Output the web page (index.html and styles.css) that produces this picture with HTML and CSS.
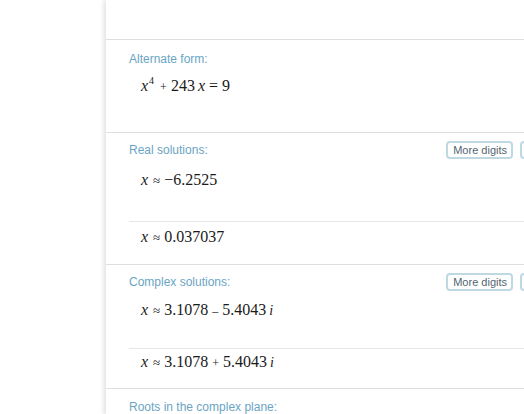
FILE: index.html
```html
<!DOCTYPE html>
<html>
<head>
<meta charset="utf-8">
<link rel="stylesheet" href="styles.css">
</head>
<body>
<div class="page">
  <div class="gutter"></div>
  <main class="panel">
    <section class="pod pod-top"></section>

    <section class="pod pod-alt">
      <div class="pod-head"><h3 class="label">Alternate form:</h3></div>
      <div class="math math-alt"><i>x</i><sup>4</sup><span class="op">+</span>243<span class="sp"></span><i>x</i><span class="op eq">=</span>9</div>
    </section>

    <section class="pod pod-real">
      <div class="pod-head">
        <h3 class="label">Real solutions:</h3>
        <div class="btns"><button class="btn">More digits</button><button class="btn btn-clipped" aria-label="Step-by-step solution"></button></div>
      </div>
      <div class="row row-first"><div class="math"><i>x</i><span class="approx">≈</span>−6.2525</div></div>
      <div class="row row-second"><div class="math"><i>x</i><span class="approx">≈</span>0.037037</div></div>
    </section>

    <section class="pod pod-complex">
      <div class="pod-head">
        <h3 class="label">Complex solutions:</h3>
        <div class="btns"><button class="btn">More digits</button><button class="btn btn-clipped" aria-label="Step-by-step solution"></button></div>
      </div>
      <div class="row row-first"><div class="math"><i>x</i><span class="approx">≈</span>3.1078<span class="op">–</span>5.4043<span class="sp"></span><i class="im">i</i></div></div>
      <div class="row row-second"><div class="math"><i>x</i><span class="approx">≈</span>3.1078<span class="op">+</span>5.4043<span class="sp"></span><i class="im">i</i></div></div>
    </section>

    <section class="pod pod-roots">
      <div class="pod-head"><h3 class="label">Roots in the complex plane:</h3></div>
    </section>
  </main>
</div>
</body>
</html>
```

FILE: styles.css
```css
html, body {
  margin: 0;
  padding: 0;
  background: #ffffff;
  overflow: hidden;
  width: 524px;
  height: 414px;
}

.page {
  display: flex;
  width: 700px;
}

.gutter {
  width: 106px;
  flex: none;
  background: #ffffff;
}

.panel {
  width: 497px;
  flex: none;
  background: #ffffff;
  box-shadow: -2px 0 5px rgba(0, 0, 0, 0.13);
  min-height: 414px;
}

.pod {
  border-bottom: 1px solid #dedede;
  padding: 0 23px;
}

.pod-top { height: 39px; padding: 0; }

.pod-alt { padding-top: 10px; height: 82px; }
.pod-real { padding-top: 8px; height: 123px; }
.pod-complex { padding-top: 8px; height: 115px; }
.pod-roots { border-bottom: none; padding-top: 9px; }

.pod-head {
  display: flex;
  align-items: center;
  min-height: 18px;
}

.label {
  flex: 1;
  margin: 0;
  font: normal 12px/14px "Liberation Sans", Arial, sans-serif;
  color: #6aa5c4;
}

.btns {
  display: flex;
  gap: 7px;
}

.btn {
  font: normal 11px/14px "Liberation Sans", Arial, sans-serif;
  color: #526570;
  background: #ffffff;
  border: 2px solid #bed8e4;
  border-radius: 4px;
  padding: 0 4px 0 5px;
  height: 18px;
  white-space: nowrap;
}

.btn-clipped {
  width: 60px;
}

.math {
  font: normal 16px/20px "Liberation Serif", "Times New Roman", serif;
  color: #1a1a1a;
  padding-left: 12px;
  white-space: nowrap;
}

.math i { font-style: italic; }

.math-alt {
  margin-top: 8px;
}

.math sup {
  font-size: 10px;
  vertical-align: 7px;
  line-height: 0;
  margin-left: 1px;
}

.op {
  font-size: 12px;
  margin: 0 4px;
}

.math-alt .op { margin: 0 4px 0 6px; }
.math-alt .op.eq { font-size: 16px; margin: 0 4px 0 4px; }

.approx {
  font-size: 13px;
  margin: 0 4px 0 5px;
}

.sp { display: inline-block; width: 3px; }

.im { font-size: 14px; }

.row + .row {
  border-top: 1px solid #e2e8ec;
}

.pod-real .row-first { padding-top: 11px; height: 51px; }
.pod-real .row-second { padding-top: 5px; }

.pod-complex .row-first { padding-top: 9px; height: 48px; }
.pod-complex .row-second { padding-top: 3px; }
```
